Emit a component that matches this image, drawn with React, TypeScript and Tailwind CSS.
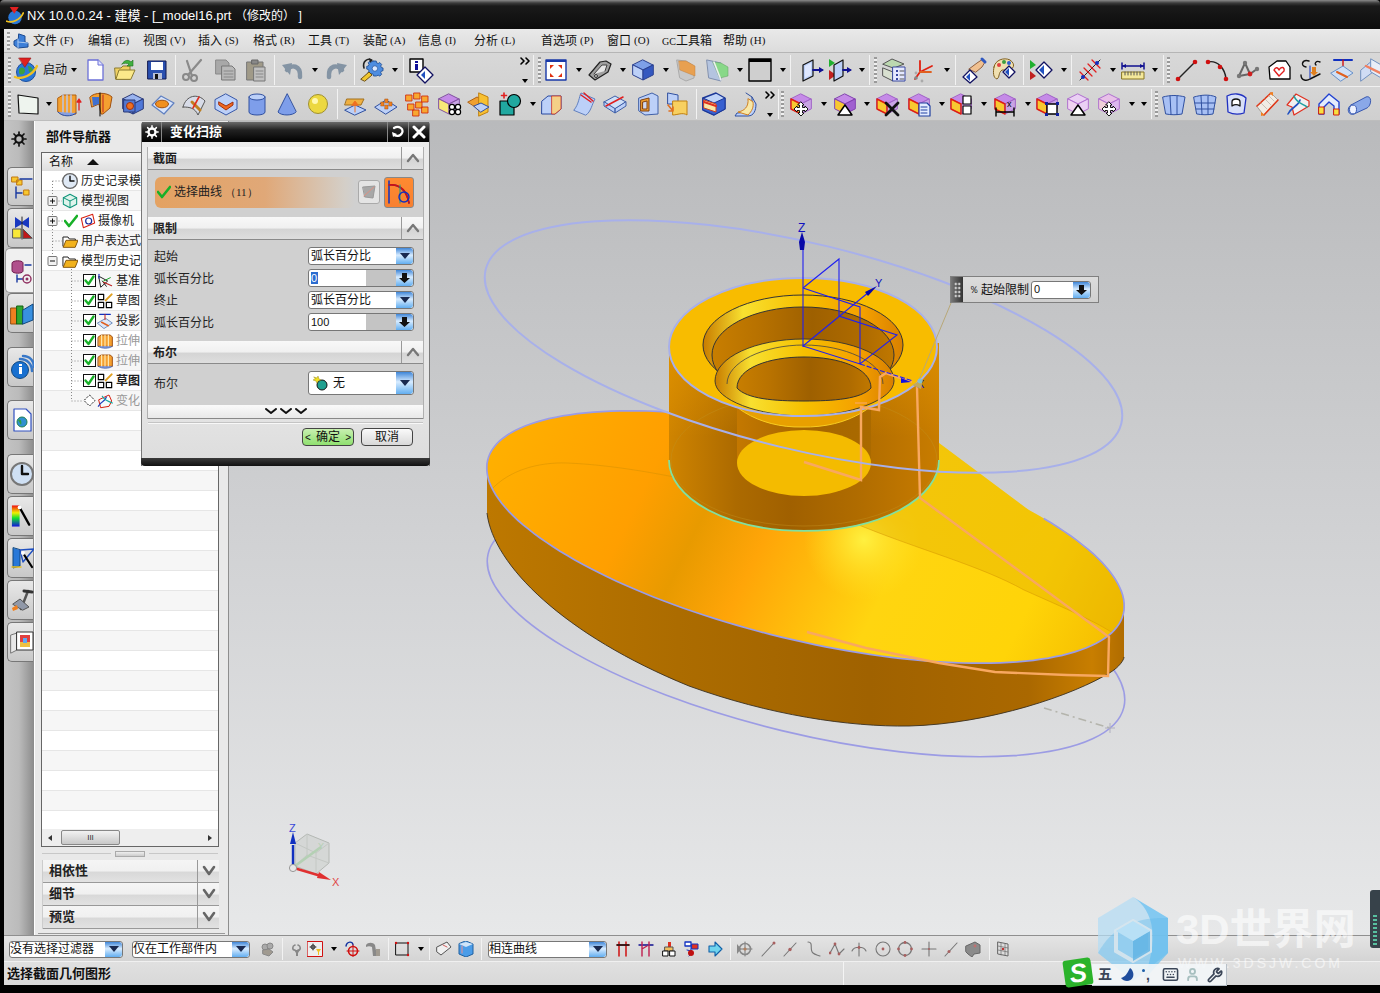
import React from "react";
import { Keyboard, Wrench, User } from "lucide-react";

const p = (d: string, fill = "none", stroke = "none", w = 1) => <path d={d} fill={fill} stroke={stroke} strokeWidth={w} strokeLinejoin="round" strokeLinecap="round" />;
const c = (x: number, y: number, r: number, fill = "none", stroke = "none", w = 1) => <circle cx={x} cy={y} r={r} fill={fill} stroke={stroke} strokeWidth={w} />;
const S = ({ children, s = 24 }: any) => <svg width={s} height={s} viewBox="0 0 24 24" className="block shrink-0 overflow-visible">{children}</svg>;
const T = ({ w, children, cls = "" }: any) => <div className={`flex items-center shrink-0 ${w} ${cls}`}>{children}</div>;
const Dd = () => <div className="w-[9px] flex justify-center"><div className="w-0 h-0 border-x-[3.5px] border-x-transparent border-t-[4px] border-t-black" /></div>;
const Grip = () => <div className="w-[3px] h-[26px] shrink-0 bg-[repeating-linear-gradient(#9a9a9a_0,#9a9a9a_2px,#f0f0f0_2px,#f0f0f0_4px)]" />;
const Sep = ({ w }: any) => <div className={`shrink-0 h-[30px] border-l border-l-[#f2f2f2] ${w}`} />;
const More = () => (
  <div className="w-[14px] h-[30px] flex flex-col items-center justify-between py-[2px] shrink-0">
    <svg width="11" height="8" viewBox="0 0 11 8">{p("M1 1l3 3-3 3M6 1l3 3-3 3", "none", "#000", 1.6)}</svg>
    <Dd />
  </div>
);

const cube = (top: string, left: string, right: string, st = "#333") => (
  <>
    {p("M12 2L22 7 12 12 2 7Z", top, st)}
    {p("M2 7L12 12V22L2 17Z", left, st)}
    {p("M22 7L12 12V22L22 17Z", right, st)}
  </>
);
const pcR = () => <>{cube("#c58ae8", "#f8c830", "#c9a4e4", "#a060c8")}{p("M2 7L12 12V22L2 17Z", "none", "#e02010", 1.4)}</>;
const MoveCross = () => p("M12 10l3 3h-1.5v2.5H16V14l3 3-3 3v-1.5h-2.5V21H15l-3 3-3-3h1.5v-2.5H8V20l-3-3 3-3v1.5h2.5V13H9Z", "#fff", "#000", 0.9);
const Tri = () => p("M12 13l7 10H5Z", "#fff", "#000", 1.5);
const gear = "M14 3h4l.6 2.6 2.3 1 2.3-1.4 2.8 2.8-1.4 2.3 1 2.3 2.4.6v4l-2.4.6-1 2.3 1.4 2.3-2.8 2.8-2.3-1.4-2.3 1L18 25h-4l-.6-2.6-2.3-1-2.3 1.4L6 20l1.4-2.3-1-2.3L4 14.8v-4l2.4-.6 1-2.3L6 5.6 8.8 2.8l2.3 1.4 2.3-1Z";

const Ic: Record<string, React.ReactNode> = {
  nx: <S>{c(12, 14, 9.5, "#2a78d8", "#1c4fa0")}{p("M5 11c3-3 6-1 6 2s-4 5-6 2ZM14 8c3 0 5 3 5 5l-4 1Z", "#3ca040")}{p("M1 19C8 22 19 17 23 8", "none", "#f0c020", 2.4)}{p("M5 0H17L11 9Z", "#e02020", "#901010", 0.6)}</S>,
  page: <S>{p("M5 2H15L20 7V22H5Z", "#fff", "#6c70d8", 1.3)}{p("M15 2V7H20", "#dfe3ff", "#6c70d8", 1)}</S>,
  folder: <S>{p("M2 10H8L10 8H17V21H3Z", "#f0d060", "#8a7a30")}{p("M3 21L6 12H22L18 21Z", "#fbe98a", "#8a7a30")}{p("M9 6C12 1 16 2 18 4L20 2V8H14L16 6C14 5 11 5 9 6Z", "#40b040", "#207020", 0.6)}</S>,
  save: <S>{p("M3 3H21V21H3Z", "#2a50b0", "#101850")}{p("M6 4H18V12H6Z", "#fff")}{p("M8 15H17V21H8Z", "#b8c0d8")}{p("M10 16H13V21H10Z", "#111")}</S>,
  scis: <S>{c(5, 19, 3, "none", "#888", 2)}{c(13, 20, 3, "none", "#888", 2)}{p("M7 17L20 2M11 18L6 3", "none", "#8a8a8a", 2.2)}</S>,
  copy: <S>{p("M3 2H13L16 5V16H3Z", "#a8a8a8", "#888")}{p("M9 8H19L22 11V22H9Z", "#b8b8b8", "#777")}{p("M11 13H20M11 16H20M11 19H20", "none", "#888")}</S>,
  paste: <S>{p("M3 4H19V22H3Z", "#a09a88", "#777")}{p("M8 2H14V6H8Z", "#888", "#666")}{p("M10 9H21V23H10Z", "#c0c0c0", "#777")}{p("M12 13H19M12 16H19M12 19H19", "none", "#888")}</S>,
  undo: <S>{p("M6 12C10 6 20 7 19 19", "none", "#8494a4", 4.5)}{p("M1 7L11 5 9 17Z", "#8494a4")}</S>,
  redo: <S>{p("M18 12C14 6 4 7 5 19", "none", "#8494a4", 4.5)}{p("M23 7L13 5 15 17Z", "#8494a4")}</S>,
  tool: <S><g transform="translate(4 1) scale(.68)">{p(gear, "#4e8de0", "#1c4a90", 1.2)}{c(16, 14, 4, "#dde9ff", "#1c4a90")}</g>{p("M1 21L9 14 12 17 5 23Z", "#f0c830", "#705010")}{p("M4 10C2 3 8 0 11 2", "none", "#222", 1.6)}{p("M9 0l4 2-3 3Z", "#222")}</S>,
  info: <S>{p("M1 1H14V14H1Z", "#fff", "#000", 1.4)}{p("M6 3h3v2H6ZM6 6h3v6H6Z", "#101098")}{p("M16 9L24 17 16 25 8 17Z", "#fff", "#101060", 1.3)}{p("M16 13V21L12 17Z", "#2050c0")}</S>,
  fit: <S>{p("M2 2H22V22H2Z", "#fff", "#1838a8", 1.4)}{p("M2 2H22V4H2Z", "#1838a8")}{p("M6 7h4L6 11ZM18 7h-4l4 4ZM6 19h4l-4-4ZM18 19h-4l4-4Z", "#e03010")}</S>,
  machine: <S>{p("M1 17L12 4 18 3 23 6 20 14 7 22Z", "#a0a0a0", "#222", 1.2)}{p("M6 16L14 7 19 7 17 13", "#e6e6e6", "#444", 1)}{c(8, 18, 1.4, "#fff", "#222")}</S>,
  bluec: <S>{cube("#7ea0e8", "#bcd0f8", "#3458c0", "#2a4090")}</S>,
  secO: <S>{p("M3 2L12 3 20 8V20L12 23 6 20Z", "#c8c8c8", "#aaa", 1)}{p("M5 3H12L21 8V18L6 12Z", "#e8a050", "#c08040", 0.5)}</S>,
  secG: <S>{p("M2 2L16 5V23L4 20Z", "#b4c4e0", "#8090b0")}{p("M8 4L16 5 23 9V18L15 20Z", "#88d888", "#60a060", 0.5)}{p("M9 4L16 22", "none", "#f0f0f0", 1.5)}</S>,
  win: <S>{p("M1 1H23V23H1Z", "#cfcfcf", "#000", 1.4)}{p("M1 1H23V4H1Z", "#000")}</S>,
  boxA: <S>{p("M3 7L13 2V18L3 23Z", "#bcd0f8", "#111", 1.2)}{p("M5 8L11 5V17L5 20Z", "#dfe8ff")}{p("M13 12H22", "none", "#101090", 1.8)}{p("M24 12l-5-3v6Z", "#101090")}</S>,
  boxB: <S>{p("M1 1V9L7 5Z", "#20b030")}{p("M1 12V22L8 17Z", "#c02020")}{p("M6 7L15 2V18L6 23Z", "#bcd0f8", "#111", 1.2)}{p("M15 12H22", "none", "#101090", 1.8)}{p("M24 12l-5-3v6Z", "#101090")}</S>,
  stack: <S>{p("M1 6L10 1 22 6 12 10Z", "#bcd8b0", "#555")}{p("M1 10L11 14V23L1 18Z", "#d8e0d0", "#555")}{p("M11 9H23V23H11Z", "#e4e8ff", "#3848a0")}{p("M14 12h2v2h-2ZM14 16h2v2h-2ZM14 20h2v2h-2Z", "#3848a0")}{p("M18 13h4M18 17h4M18 21h4", "none", "#555")}</S>,
  csys: <S>{p("M8 14V3M8 14L20 8M8 14L3 21", "none", "#e02010", 1.8)}{p("M8 14H19", "none", "#e06020", 1.8)}{c(4, 20, 1.8, "#888")}{c(4, 15, 1.4, "#aaa")}{c(10, 23, 1.4, "#aaa")}</S>,
  hand: <S>{p("M7 11L15 5 21 1 23 4 20 9 14 14Z", "#f0c090", "#906040")}{p("M20 1L23 4", "none", "#3058c0", 3)}{p("M8 12L15 19 8 25 1 19Z", "#fff", "#101060", 1.3)}{p("M8 15V23L4 19Z", "#2050c0")}</S>,
  palette: <S>{p("M2 9C3 2 12-1 18 2 24 6 22 12 15 12H10C6 15 8 19 5 21 1 20 1 14 2 9Z", "#f0e0b0", "#806020")}{c(7, 7, 2, "#e04040")}{c(12, 4, 2, "#40a040")}{c(17, 5, 2, "#3060d0")}{p("M17 8L23 14 17 20 11 14Z", "#fff", "#101060", 1.3)}{p("M17 10V18L13 14Z", "#2050c0")}</S>,
  triD: <S>{p("M1 2V11L7 7Z", "#20b030")}{p("M1 13V22L7 18Z", "#c02020")}{p("M15 4L23 12 15 20 7 12Z", "#fff", "#101060", 1.3)}{p("M15 7V17L10 12Z", "#2050c0")}</S>,
  hatch: <S>{p("M2 22L22 2", "none", "#222", 1)}{p("M2 14L10 22M6 10L14 18M10 6L18 14M14 2L22 10", "none", "#e02020", 1.3)}{c(5, 19, 2, "#1030c0")}{c(19, 5, 2, "#1030c0")}</S>,
  ruler: <S>{p("M1 5V11M23 5V11M1 8H23", "none", "#101090", 1.5)}{p("M1 8l4-2v4ZM23 8l-4-2v4Z", "#101090")}{p("M1 14H23V21H1Z", "#f4e89a", "#887722")}{p("M4 14v3M7 14v3M10 14v3M13 14v3M16 14v3M19 14v3", "none", "#555")}</S>,
  line: <S>{p("M4 21L21 4", "none", "#222", 1.4)}{c(4, 21, 2.3, "#d01010")}{c(21, 4, 2.3, "#d01010")}</S>,
  arc: <S>{p("M3 4C12 2 20 10 21 21", "none", "#222", 1.4)}{c(3, 4, 2.3, "#d01010")}{c(15, 9, 2.3, "#d01010")}{c(21, 21, 2.3, "#d01010")}</S>,
  poly: <S>{p("M3 18L9 5 14 16 21 11M3 18L14 16", "none", "#666", 2)}{c(9, 5, 2.2, "#777")}{c(3, 18, 2.2, "#777")}{c(21, 11, 2.2, "#777")}{c(14, 16, 2.4, "#d02020")}</S>,
  heart: <S>{p("M2 9L10 3H19L23 9V21H3Z", "#fff", "#000", 1.3)}{p("M7 12C9 8 11 10 12 12 14 8 18 9 17 13L12 18Z", "none", "#e02020", 1.4)}</S>,
  hook: <S>{p("M11 3C4 1 2 8 8 9M3 17C3 23 9 23 12 21L22 16M22 4C18 2 16 6 18 7", "none", "#111", 1.4)}{p("M12 8V20", "none", "#1030c0", 1)}{p("M14 9h4v5h2l-4 4-4-4h2Z", "#e08020")}</S>,
  proj: <S>{p("M4 2H22", "none", "#1030c0", 2)}{p("M13 2V10", "none", "#d01010", 1.4)}{p("M13 14l-3-4h6Z", "#d01010")}{p("M1 15L13 8 23 15 11 23Z", "#cfe0f8", "#6890c8")}{p("M7 14L17 19", "none", "#e06020", 2)}</S>,
  inter: <S>{p("M1 12L13 2V14L1 23Z", "#d0dcf4", "#7090c0")}{p("M11 1L23 8V21L11 14Z", "#e8edf8", "#7090c0")}{p("M6 8L20 15", "none", "#f08060", 2.5)}</S>,
  sheet: <S>{p("M2 3L22 6V22L3 21Z", "#eef4ee", "#111", 1.2)}</S>,
  ext: <S>{p("M1 6L6 3 19 3 19 22 6 23 1 20Z", "#f4a030", "#b06010")}{p("M6 3V23M10 3V22M14 3V22", "none", "#b8c8f0", 1.4)}{p("M1 20C5 25 15 25 19 21", "#88a0e0", "#3050a0")}{p("M22 18V9M22 7l-2 3h4Z", "none", "#e02020", 1.3)}</S>,
  rev: <S>{p("M1 5C5 0 18 0 23 5L21 16 14 22H12L10 12 3 15Z", "#f4a030", "#a05010")}{p("M11 1V24", "none", "#000", 1)}{p("M3 5H10V12L4 14Z", "#4070d0")}{p("M14 3V20", "none", "#c02020", 1)}</S>,
  bluehole: <S>{cube("#9ab4f0", "#7e9ee8", "#5078d8", "#283878")}{p("M3 8H14V20H3Z", "#5578d0", "#283878")}{c(9, 14, 3.5, "#f07020", "#a03010")}</S>,
  pad: <S>{p("M1 13L10 4 23 11 13 22Z", "#d8e4fa", "#6080c0", 1.2)}<ellipse cx="11" cy="12" rx="6.5" ry="3.8" fill="#f09020" stroke="#a05010" /></S>,
  rib: <S>{p("M1 15C4 3 16 1 23 9L16 23C13 16 8 15 1 15Z", "#d8dce8", "#555")}{p("M10 10L18 18", "none", "#c08020", 3)}{p("M17 5L11 16", "none", "#e03020", 1.6)}</S>,
  shell: <S>{p("M12 2L23 8V17L12 23 1 17V8Z", "#bcd0f8", "#3858a8")}{p("M5 10L12 14 19 10 19 13 12 18 5 13Z", "#f06820", "#a03010")}</S>,
  cyl: <S>{p("M4 5V20C4 24 20 24 20 20V5Z", "#7e9eea", "#3050a0")}<ellipse cx="12" cy="5" rx="8" ry="3" fill="#bcd0f8" stroke="#3050a0" /></S>,
  cone: <S>{p("M12 2L3 20C6 24 18 24 21 20Z", "#7e9eea", "#3050a0")}</S>,
  sphere: <S>{c(12, 12, 9.5, "#ecd840", "#a09030")}{c(9, 9, 3, "#fff8b0")}</S>,
  plane: <S>{p("M4 7H21L18 13H2Z", "#f0b040", "#a07020")}{p("M2 18L12 13 23 18 12 23Z", "#bcd0f8", "#3050a0")}{p("M12 20V11M9 13l3-4 3 4Z", "#f07020", "#f07020")}</S>,
  pins: <S>{p("M1 15L12 8 23 15 12 22Z", "#bcd0f8", "#3050a0")}{p("M7 10h3v4H7ZM11 7h3v4h-3ZM15 10h3v4h-3ZM11 13h3v4h-3Z", "#f08020", "#a05010", 0.5)}</S>,
  cubes: <S>{p("M1 3h6v6H1ZM9 1h6v6H9ZM17 4h6v6h-6ZM3 12h6v6H3ZM11 10h6v6h-6ZM17 15h6v6h-6ZM8 18h6v6H8Z", "#f8a830", "#d03010", 0.9)}</S>,
  cholo: <S>{cube("#c58ae8", "#f8e878", "#c9a4e4", "#8050a0")}{c(15, 15, 2.6, "#fff", "#000", 1.2)}{c(21, 15, 2.6, "#fff", "#000", 1.2)}{c(15, 20, 2.6, "#fff", "#000", 1.2)}{c(21, 20, 2.6, "#fff", "#000", 1.2)}</S>,
  split: <S>{p("M1 10L10 5 18 9 9 15Z", "#f0a030", "#b06010")}{p("M12 1L21 5V20L12 24Z", "#f8c030", "#c08010")}{p("M7 14L14 11 22 15 14 20Z", "#bcd0f8", "#3050a0")}</S>,
  boole: <S>{p("M1 9H15V23H1Z", "#20a8a0", "#000", 1.2)}{c(15, 9, 6.5, "#20a8a0", "#000", 1.2)}{p("M5 1V6M2.5 3.5H7.5", "none", "#e02020", 1.6)}</S>,
  bsub: <S>{p("M1 9L7 4H20V17L14 22H1Z", "#bcd0f8", "#2848a0")}{p("M11 4H20V17L14 22H11Z", "#f4d088", "#d03020", 0.8)}</S>,
  trim: <S>{p("M2 18C7 12 7 5 9 1L23 7C20 12 19 20 14 23Z", "#bcd0f8", "#6080c0")}{p("M12 1L21 9M9 3L19 10", "none", "#e02020", 1.5)}</S>,
  cut: <S>{p("M1 10L12 4 23 10 12 17Z", "#cfe0f8", "#4060a8")}{p("M1 10V14L12 21V17ZM23 10V14L12 21V17Z", "#bcd0f8", "#4060a8")}{p("M3 14L20 5", "none", "#e02020", 1.6)}</S>,
  shell2: <S>{p("M4 6L17 1 23 4V22L10 23 4 19Z", "#bcd0f8", "#4060a8")}{p("M6 8L14 6V19H6Z", "#f0a030", "#804010")}{p("M8 10L12 9V17H8Z", "#cfd8f0", "#804010")}</S>,
  mirror: <S>{p("M3 1L13 3V12H3Z", "#bcd0f8", "#3050a0")}{p("M8 9H22V23C18 20 12 23 8 23Z", "#f8d060", "#c08010")}{p("M3 13L8 19M8 15V19H4", "none", "#e07020", 1.6)}</S>,
  blend: <S>{p("M1 6L14 1 23 6V17L12 23 1 18Z", "#c0d4f8", "#1c3898", 1.4)}{p("M1 6L12 11 23 6V17L12 23 1 18Z", "#3860d0", "#1c3898")}{p("M2 8L14 12V20L2 16Z", "#f8e8a8", "#cc4020")}{p("M2 10L14 14", "none", "#e03020", 2)}</S>,
  sweep: <S>{p("M12 1L18 5V14C16 19 8 21 3 21L1 24H14C20 24 22 18 22 12L18 5", "#bcd0f8", "#3050a0")}{p("M14 7C15 15 10 19 4 20L14 23C18 19 20 15 19 10Z", "#f8e8a8", "#d08020")}</S>,
  cmove: <S>{pcR()}<MoveCross /></S>,
  cdraft: <S>{cube("#c58ae8", "#f8c830", "#a060d0", "#8040b0")}<Tri /></S>,
  cdel: <S>{pcR()}{p("M11 11L23 23M23 11L11 23", "none", "#111", 2.8)}</S>,
  cpage: <S>{pcR()}{p("M12 11H20L23 14V24H12Z", "#e4ecff", "#2040a0", 1.2)}{p("M14 15h6M14 18h6M14 21h6", "none", "#2040a0")}</S>,
  ctwin: <S>{pcR()}{p("M14 4H22V12H14ZM14 14H22V22H14Z", "#fff", "#000", 1.2)}</S>,
  cdim: <S>{pcR()}{p("M3 16V24M21 16V24M3 20H21", "none", "#000", 1.4)}<text x="14" y="15" fontSize="9" fontFamily="Liberation Sans" fill="#000">x</text></S>,
  cres: <S>{pcR()}{p("M12 12H22V22H12Z", "#fff", "#000", 1.4)}{p("M10 10h3v3h-3ZM21 10h3v3h-3ZM10 21h3v3h-3ZM21 21h3v3h-3Z", "#1020a0")}</S>,
  cdr2: <S>{cube("#ead0f4", "#f0d4f0", "#ead0f4", "#b070d0")}<Tri /></S>,
  cmv2: <S>{cube("#e8c0e8", "#f0d0d8", "#ddb8ee", "#b070d0")}<MoveCross /></S>,
  s1: <S>{p("M1 5C8 3 16 3 23 5L20 22C15 23 9 23 4 22Z", "#a8c0f4", "#3050a0")}{p("M8 4L9 22M15 4L15 22", "none", "#3050a0")}</S>,
  s2: <S>{p("M1 5C8 3 16 2 23 5L20 22C15 23 9 23 4 22Z", "#a8c0f4", "#3050a0")}{p("M8 4L9 22M15 4L15 22M2 11H22M3 17H21", "none", "#3050a0")}</S>,
  s3: <S>{p("M3 4C9 1 17 1 22 6L20 21C14 23 8 22 4 20Z", "#d8e0f8", "#2030c0", 1.3)}{p("M8 10C8 6 16 6 16 10V14C13 12 11 12 8 14Z", "#fff", "#111", 1.3)}</S>,
  s4: <S>{p("M2 14L16 1 23 8 9 23Z", "#f0ece4", "#a8a098")}{p("M2 14L16 1M9 23L23 8", "none", "#e03818", 1.6)}{p("M6 11l6 6M10 7l6 6M14 4l5 5", "none", "#c8c0b8")}{p("M14 1l4-1v4ZM10 23l-4 1v-4Z", "#f08020")}</S>,
  s5: <S>{p("M1 13L10 2 23 9V14L8 23 6 15Z", "#f0f0f0", "#e03020", 1.2)}{p("M2 22C6 14 12 15 14 8", "none", "#2050c0", 1.6)}{p("M8 4C11 12 18 12 21 15", "none", "#20a0a0", 1.6)}</S>,
  s6: <S>{p("M2 12L12 2 22 10V22H17V14L12 10 7 15V22H2Z", "#e4ecfc", "#2040d0", 1.4)}{p("M2 15H7V22H2ZM17 17H22V23H17Z", "#f8e040", "#d02010")}</S>,
  s7: <S>{p("M3 13L18 5C24 3 24 13 19 16L6 22C0 24-2 16 3 13Z", "#8aa8e8", "#3858b0")}<ellipse cx="5" cy="17.5" rx="3.5" ry="4.4" fill="#eef2ff" stroke="#3858b0" /></S>,
};

const Row1 = () => (
  <div className="h-[34px] flex items-center pl-[1px] bg-[linear-gradient(#d8d8d8,#d2d2d2)] border-b border-b-[#f0f0f0]">
    <T w="w-[9px]" cls="pl-[3px]"><Grip /></T>
    <T w="w-[26px]">{Ic.nx}</T>
    <T w="w-[29px]" cls="pl-[3px] text-[12px] text-[#111]">启动</T>
    <T w="w-[14px]"><Dd /></T>
    <T w="w-[30px]">{Ic.page}</T>
    <T w="w-[32px]">{Ic.folder}</T>
    <T w="w-[30px]">{Ic.save}</T>
    <Sep w="w-[6px]" />
    <T w="w-[32px]">{Ic.scis}</T>
    <T w="w-[31px]">{Ic.copy}</T>
    <T w="w-[30px]">{Ic.paste}</T>
    <Sep w="w-[7px]" />
    <T w="w-[29px]">{Ic.undo}</T>
    <T w="w-[14px]"><Dd /></T>
    <T w="w-[30px]">{Ic.redo}</T>
    <Sep w="w-[6px]" />
    <T w="w-[30px]">{Ic.tool}</T>
    <T w="w-[13px]"><Dd /></T>
    <Sep w="w-[6px]" />
    <T w="w-[109px]">{Ic.info}</T>
    <More />
    <T w="w-[1px]"><span /></T>
    <Sep w="w-[5px]" />
    <T w="w-[6px]"><Grip /></T>
    <T w="w-[30px]">{Ic.fit}</T><T w="w-[14px]"><Dd /></T>
    <T w="w-[30px]">{Ic.machine}</T><T w="w-[13px]"><Dd /></T>
    <T w="w-[30px]">{Ic.bluec}</T><T w="w-[13px]"><Dd /></T>
    <T w="w-[31px]">{Ic.secO}</T>
    <T w="w-[30px]">{Ic.secG}</T><T w="w-[13px]"><Dd /></T>
    <T w="w-[30px]">{Ic.win}</T><T w="w-[12px]"><Dd /></T>
    <Sep w="w-[10px]" />
    <T w="w-[28px]">{Ic.boxA}</T>
    <T w="w-[29px]">{Ic.boxB}</T><T w="w-[12px]"><Dd /></T>
    <Sep w="w-[5px]" />
    <T w="w-[8px]"><Grip /></T>
    <T w="w-[30px]">{Ic.stack}</T>
    <T w="w-[30px]">{Ic.csys}</T><T w="w-[13px]"><Dd /></T>
    <Sep w="w-[7px]" />
    <T w="w-[30px]">{Ic.hand}</T>
    <T w="w-[31px]">{Ic.palette}</T>
    <Sep w="w-[6px]" />
    <T w="w-[30px]">{Ic.triD}</T><T w="w-[12px]"><Dd /></T>
    <Sep w="w-[7px]" />
    <T w="w-[30px]">{Ic.hatch}</T><T w="w-[13px]"><Dd /></T>
    <T w="w-[29px]">{Ic.ruler}</T><T w="w-[13px]"><Dd /></T>
    <Sep w="w-[4px]" />
    <T w="w-[7px]"><Grip /></T>
    <T w="w-[31px]">{Ic.line}</T>
    <T w="w-[31px]">{Ic.arc}</T>
    <T w="w-[31px]">{Ic.poly}</T>
    <T w="w-[31px]">{Ic.heart}</T>
    <T w="w-[32px]">{Ic.hook}</T>
    <T w="w-[30px]">{Ic.proj}</T>
    <T w="w-[20px]">{Ic.inter}</T>
  </div>
);

const Row2 = () => (
  <div className="h-[34px] flex items-center pl-[1px] bg-[linear-gradient(#d6d6d6,#cfcfcf)] border-b border-b-[#bdbdbd]">
    <T w="w-[11px]" cls="pl-[3px]"><Grip /></T>
    <T w="w-[28px]">{Ic.sheet}</T><T w="w-[13px]"><Dd /></T>
    <T w="w-[32px]">{Ic.ext}</T>
    <T w="w-[32px]">{Ic.rev}</T>
    <T w="w-[30px]">{Ic.bluehole}</T>
    <T w="w-[31px]">{Ic.pad}</T>
    <T w="w-[32px]">{Ic.rib}</T>
    <T w="w-[31px]">{Ic.shell}</T>
    <T w="w-[30px]">{Ic.cyl}</T>
    <T w="w-[31px]">{Ic.cone}</T>
    <T w="w-[31px]">{Ic.sphere}</T>
    <Sep w="w-[6px]" />
    <T w="w-[31px]">{Ic.plane}</T>
    <T w="w-[31px]">{Ic.pins}</T>
    <T w="w-[32px]">{Ic.cubes}</T>
    <T w="w-[30px]">{Ic.cholo}</T>
    <T w="w-[32px]">{Ic.split}</T>
    <T w="w-[29px]">{Ic.boole}</T><T w="w-[13px]"><Dd /></T>
    <T w="w-[31px]">{Ic.bsub}</T>
    <T w="w-[31px]">{Ic.trim}</T>
    <T w="w-[32px]">{Ic.cut}</T>
    <T w="w-[30px]">{Ic.shell2}</T>
    <T w="w-[31px]">{Ic.mirror}</T>
    <Sep w="w-[6px]" />
    <T w="w-[32px]">{Ic.blend}</T>
    <T w="w-[29px]">{Ic.sweep}</T>
    <More />
    <T w="w-[1px]"><span /></T>
    <Sep w="w-[3px]" />
    <T w="w-[8px]"><Grip /></T>
    <T w="w-[30px]">{Ic.cmove}</T><T w="w-[14px]"><Dd /></T>
    <T w="w-[29px]">{Ic.cdraft}</T><T w="w-[13px]"><Dd /></T>
    <T w="w-[32px]">{Ic.cdel}</T>
    <T w="w-[30px]">{Ic.cpage}</T><T w="w-[12px]"><Dd /></T>
    <T w="w-[30px]">{Ic.ctwin}</T><T w="w-[14px]"><Dd /></T>
    <T w="w-[30px]">{Ic.cdim}</T><T w="w-[12px]"><Dd /></T>
    <T w="w-[31px]">{Ic.cres}</T>
    <T w="w-[31px]">{Ic.cdr2}</T>
    <T w="w-[30px]">{Ic.cmv2}</T><T w="w-[12px]"><Dd /></T>
    <T w="w-[12px]"><Dd /></T>
    <Sep w="w-[4px]" />
    <T w="w-[7px]"><Grip /></T>
    <T w="w-[31px]">{Ic.s1}</T>
    <T w="w-[31px]">{Ic.s2}</T>
    <T w="w-[31px]">{Ic.s3}</T>
    <T w="w-[31px]">{Ic.s4}</T>
    <T w="w-[31px]">{Ic.s5}</T>
    <T w="w-[31px]">{Ic.s6}</T>
    <T w="w-[24px]">{Ic.s7}</T>
  </div>
);

const M = ({ t, k, w }: any) => (
  <div className={`flex items-center shrink-0 ${w}`}>
    <span>{t}</span>
    <span className="ml-[3px] text-[11px] font-['Liberation_Serif',serif]">({k})</span>
  </div>
);

const Menu = () => (
  <div className="h-[24px] flex items-center pl-[3px] bg-[linear-gradient(#e9e9e9,#dcdcdc)] border-b border-b-[#b5b5b5] text-[12px] text-[#111]">
    <div className="w-[3px] h-[18px] mr-[3px] bg-[repeating-linear-gradient(#a0a0a0_0,#a0a0a0_2px,#f0f0f0_2px,#f0f0f0_4px)]" />
    <div className="w-[20px]"><svg width="16" height="16" viewBox="0 0 16 16">{p("M6 1L12 3V9L15 10V14L5 15 1 12V8L5 6Z", "#3d7fd8", "#1c4a90")}{p("M5 6V15M5 9L15 10", "none", "#a8c8f0")}</svg></div>
    <M t="文件" k="F" w="w-[55px]" />
    <M t="编辑" k="E" w="w-[55px]" />
    <M t="视图" k="V" w="w-[55px]" />
    <M t="插入" k="S" w="w-[55px]" />
    <M t="格式" k="R" w="w-[55px]" />
    <M t="工具" k="T" w="w-[55px]" />
    <M t="装配" k="A" w="w-[55px]" />
    <M t="信息" k="I" w="w-[56px]" />
    <M t="分析" k="L" w="w-[67px]" />
    <M t="首选项" k="P" w="w-[66px]" />
    <M t="窗口" k="O" w="w-[55px]" />
    <div className="w-[61px] shrink-0"><span className="text-[10px] font-['Liberation_Serif',serif]">GC</span>工具箱</div>
    <M t="帮助" k="H" w="w-[50px]" />
  </div>
);

const CheckBox = () => (
  <svg width="13" height="13" viewBox="0 0 13 13" className="shrink-0">
    <rect x="0.5" y="0.5" width="12" height="12" fill="#fff" stroke="#111" />
    {p("M2.5 6.5L5.5 10 10.5 2.5", "none", "#18b028", 2.4)}
  </svg>
);
const small = (n: React.ReactNode) => <svg width="16" height="16" viewBox="0 0 24 24" className="shrink-0">{n}</svg>;
const Tk = () => <svg width="14" height="14" viewBox="0 0 14 14" className="shrink-0">{p("M1 7L5 12 13 2", "none", "#18b028", 2.6)}</svg>;
const clockI = small(<>{c(12, 12, 11, "#dfe9f5", "#666", 2)}{p("M12 5V12H18", "none", "#111", 2.2)}</>);
const folderI = small(<>{p("M2 6H9L11 9H20V20H2Z", "#fff", "#222", 1.5)}{p("M2 21L6 11H24L20 21Z", "#f2b21c", "#8a5c10", 1.5)}</>);
const viewI = small(<>{p("M12 2L22 7V17L12 22 2 17V7Z", "#dff4ec", "#10957a", 1.6)}{p("M2 7L12 12 22 7M12 12V22", "none", "#10957a", 1.5)}</>);
const camI = small(<>{p("M2 8L19 2 22 15 5 22Z", "#fff", "#d82010", 1.6)}{c(13, 12, 4.5, "none", "#1a2aa0", 1.8)}</>);
const csysI = small(<>{p("M3 5L16 12 6 21ZM8 12L14 20", "none", "#222", 1.5)}{p("M10 12L20 7", "none", "#18a028", 1.5)}{p("M3 2V8", "none", "#2030c0", 1.6)}{p("M10 14L22 19", "none", "#c02020", 1.6)}</>);
const sketchI = small(<>{p("M2 2H10V10H2ZM2 14H10V22H2ZM14 14H22V22H14Z", "#fff", "#000", 1.8)}{p("M13 11L22 2", "none", "#e0a020", 3)}</>);
const projI = small(<>{p("M4 2H20", "none", "#1030c0", 2)}{p("M1 15L13 8 23 15 11 23Z", "#dfe8f8", "#7090c0", 1.5)}{p("M7 14L17 19", "none", "#e06020", 2.4)}{p("M12 2V10", "none", "#c02020", 1.5)}</>);
const extI = small(<>{p("M2 6L6 3H20L23 6V20H2Z", "#f4a030", "#a05010", 1.5)}{p("M7 3V21M12 3V21M17 3V21", "none", "#fff2c0", 1.6)}{p("M2 20C7 24 18 24 23 20", "#7b9ae0", "#3050a0")}</>);
const morphI = small(<>{p("M3 10L18 3 22 12 18 20 6 22Z", "#f6fbfa", "#d82010", 1.5)}{p("M2 20C6 12 12 14 14 6", "none", "#2040c0", 1.8)}{p("M8 5C12 13 18 12 23 15", "none", "#18a8a0", 1.8)}</>);
const Diam = () => <svg width="13" height="13" viewBox="0 0 13 13" className="shrink-0"><path d="M6.5 1L12 6.5 6.5 12 1 6.5Z" fill="#fff" stroke="#111" strokeDasharray="2 1.4" /></svg>;

const gapS = (k: string, w: string) => <span key={k} className={`${w} shrink-0`} />;
const treeRows: any[] = [
  { c: "pl-[20px]", i: [clockI], g: "ml-[3px]", t: "历史记录模" },
  { c: "pl-[20px]", i: [viewI], g: "ml-[3px]", t: "模型视图" },
  { c: "pl-[22px]", i: [<Tk key="a" />, gapS("b", "w-[2px]"), camI], g: "ml-[2px]", t: "摄像机" },
  { c: "pl-[20px]", i: [folderI], g: "ml-[3px]", t: "用户表达式" },
  { c: "pl-[20px]", i: [folderI], g: "ml-[3px]", t: "模型历史记" },
  { c: "pl-[41px]", i: [<CheckBox key="a" />, gapS("b", "w-[1px]"), csysI], g: "ml-[3px]", t: "基准" },
  { c: "pl-[41px]", i: [<CheckBox key="a" />, gapS("b", "w-[1px]"), sketchI], g: "ml-[3px]", t: "草图" },
  { c: "pl-[41px]", i: [<CheckBox key="a" />, gapS("b", "w-[1px]"), projI], g: "ml-[3px]", t: "投影" },
  { c: "pl-[41px]", i: [<CheckBox key="a" />, gapS("b", "w-[1px]"), extI], g: "ml-[3px] text-[#999]", t: "拉伸" },
  { c: "pl-[41px]", i: [<CheckBox key="a" />, gapS("b", "w-[1px]"), extI], g: "ml-[3px] text-[#999]", t: "拉伸" },
  { c: "pl-[41px]", i: [<CheckBox key="a" />, gapS("b", "w-[1px]"), sketchI], g: "ml-[3px] font-bold", t: "草图" },
  { c: "pl-[41px]", i: [<Diam key="a" />, gapS("b", "w-[1px]"), morphI], g: "ml-[3px] text-[#999]", t: "变化" },
];

const TreeLines = () => (
  <svg className="absolute left-0 top-0 pointer-events-none" width="176" height="260">
    <g stroke="#888" strokeDasharray="1 2" fill="none">
      <path d="M10.5 10V90M10.5 10H20M10.5 30H20M10.5 50H22M10.5 70H20M29.5 98V230M29.5 110H41M29.5 130H41M29.5 150H41M29.5 170H41M29.5 190H41M29.5 210H41M29.5 230H41" />
    </g>
    {[30, 50, 90].map((y, i) => (
      <g key={i}>
        <rect x="6" y={y - 4.5} width="9" height="9" rx="1" fill="#f2f2f2" stroke="#777" />
        <path d={i === 2 ? `M8 ${y}H13` : `M8 ${y}H13M10.5 ${y - 2.5}V${y + 2.5}`} stroke="#111" />
      </g>
    ))}
  </svg>
);

const Tree = () => {
  const rows = Array.from({ length: 33 });
  return (
    <div className="w-[178px] h-[695px] border border-[#666] bg-white flex flex-col">
      <div className="h-[18px] shrink-0 flex items-center pl-[7px] bg-[linear-gradient(#f6f6f6,#dedede)] text-[12px] text-[#111]">
        名称
        <div className="ml-[14px] w-0 h-0 border-x-[6px] border-x-transparent border-b-[6px] border-b-[#111]" />
      </div>
      <div className="relative flex-1 overflow-hidden">
        {rows.map((_, i) => {
          const r = treeRows[i];
          return (
            <div key={i} className={`h-[20px] flex items-center whitespace-nowrap text-[12px] text-[#222] border-b border-b-[#e6e6e6] ${i % 2 ? "bg-[#f6f6f6]" : "bg-white"} ${r ? r.c : ""}`}>
              {r && r.i}
              {r && <span className={`shrink-0 ${r.g}`}>{r.t}</span>}
            </div>
          );
        })}
        <TreeLines />
      </div>
      <div className="h-[17px] shrink-0 flex items-center bg-[#eeeeee] px-[6px]">
        <div className="w-0 h-0 border-y-[3.5px] border-y-transparent border-r-[4px] border-r-[#333]" />
        <div className="ml-[9px] w-[59px] h-[15px] rounded-[2px] border border-[#888] bg-[linear-gradient(#f2f2f2,#c8c8c8)] flex items-center justify-center text-[8px] text-[#333] leading-none">III</div>
        <div className="ml-auto w-0 h-0 border-y-[3.5px] border-y-transparent border-l-[4px] border-l-[#333]" />
      </div>
    </div>
  );
};

const Vee = () => <svg width="14" height="12" viewBox="0 0 14 12">{p("M2 2L7 9 12 2", "none", "#666", 2.6)}</svg>;
const Caret = () => <svg width="14" height="10" viewBox="0 0 14 10">{p("M2 8L7 2 12 8", "none", "#777", 2.4)}</svg>;

const NavSec = ({ t }: any) => (
  <div className="h-[23px] flex items-center border-b border-b-[#999] bg-[linear-gradient(#f5f5f5,#f0f0f0_50%,#d8d8d8_55%,#e2e2e2)]">
    <div className="w-[154px] pl-[6px] text-[13px] font-bold text-[#222]">{t}</div>
    <div className="flex-1 h-full border-l border-l-[#999] flex items-center justify-center"><Vee /></div>
  </div>
);

const Nav = () => (
  <div className="w-[195px] shrink-0 h-full bg-[#e9e9e9] border-l border-l-white border-r border-r-[#8e8e8e] flex flex-col">
    <div className="h-[31px] pl-[11px] text-[13px] font-bold text-[#111] flex items-center">部件导航器</div>
    <div className="pl-[6px]"><Tree /></div>
    <div className="h-[13px] pl-[7px] flex items-center">
      <div className="w-[69px] h-px bg-[#c8c8c8]" />
      <div className="mx-[4px] w-[30px] h-[6px] border border-[#aaa] bg-[linear-gradient(#eee,#ccc)]" />
      <div className="w-[69px] h-px bg-[#c8c8c8]" />
    </div>
    <div className="ml-[7px] w-[177px] border-l border-l-[#ccc]">
      <NavSec t="相依性" />
      <NavSec t="细节" />
      <NavSec t="预览" />
    </div>
    <div className="mt-auto mx-[3px] h-[2px] border-t border-t-[#999]" />
  </div>
);

const Tab = ({ cls, children, active }: any) => (
  <div className={`flex items-center pl-[2px] rounded-l-[5px] border-y border-l ${active ? "w-[28px] -ml-[2px] bg-[#f0f0f0] border-[#999]" : "w-[26px] bg-[linear-gradient(#e8e8e8,#c8c8c8)] border-[#777]"} ${cls}`}>
    {children}
  </div>
);

const TabStrip = () => (
  <div className="w-[30px] shrink-0 h-full pl-[3px] bg-[linear-gradient(90deg,#c4c4c4,#bbb_50%,#8c8c8c)] flex flex-col">
    <div className="h-[31px] flex items-center pl-[4px] mt-[2px]">
      <svg width="16" height="16" viewBox="0 0 16 16">{c(8, 8, 3.8, "none", "#111", 2.2)}{p("M8 1V3M8 13V15M1 8H3M13 8H15M3 3L4.5 4.5M11.5 11.5L13 13M3 13L4.5 11.5M11.5 4.5L13 3", "none", "#111", 1.7)}</svg>
    </div>
    <Tab cls="mt-[13px] h-[39px]"><S>{p("M2 2h6v5H2ZM7 5h5v5H7Z", "#f8c830", "#c07810")}{p("M6 12V23M6 18H12M10 4H22", "none", "#1838a0", 1.4)}{p("M14 15h5v5h-5Z", "#f8c830", "#c07810")}</S></Tab>
    <Tab cls="mt-[2px] h-[40px]"><S>{p("M5 1L12 6V8L5 12ZM19 1L12 6V8L19 12Z", "#1838c0")}{p("M12 1V23", "none", "#222", 1)}{p("M3 13H11V22H3Z", "#f8e838", "#555")}{p("M13 22V13L22 22Z", "#c01818", "#555")}</S></Tab>
    <Tab active cls="h-[45px]"><S>{p("M4 4C4 1 15 1 15 4V12C15 15 4 15 4 12Z", "#b0508c", "#702050")}{p("M9 16V23M9 20H15M17 6H23", "none", "#1838a0", 1.4)}{c(19, 20, 4, "none", "#903060", 1.4)}{c(19, 20, 1.5, "#903060")}</S></Tab>
    <Tab cls="h-[40px]"><S>{p("M1 7H7V23H1Z", "#f08020", "#905010")}{p("M7 5H13V23H7Z", "#30a830", "#106010")}{p("M13 9L23 3V19L13 23Z", "#3890e0", "#104880")}</S></Tab>
    <Tab cls="mt-[14px] h-[40px]"><S>{c(10, 15, 8.5, "#1870d0", "#104880")}{p("M9 9h3v2H9ZM9 12h3v7H9Z", "#fff")}{p("M10 4C17 4 22 9 22 16M13 1C20 1 24 6 24 12", "none", "#3878c8", 2.5)}</S></Tab>
    <Tab cls="mt-[13px] h-[40px]"><S>{p("M4 1H16L21 6V23H4Z", "#fff", "#3050c0", 1.2)}{c(12, 14, 5, "#3090d0", "#208050")}{p("M8 12c3-2 4 2 3 5", "#30a040")}</S></Tab>
    <Tab cls="mt-[14px] h-[40px]"><S>{c(12, 12, 11, "#cfe0f4", "#777", 2)}{p("M12 4V12H18", "none", "#111", 2.4)}</S></Tab>
    <Tab cls="mt-[2px] h-[40px]"><svg width="24" height="24" viewBox="0 0 24 24"><defs><linearGradient id="rb" x2="0" y2="1"><stop stopColor="#f01010" /><stop offset=".35" stopColor="#f0f000" /><stop offset=".6" stopColor="#10e030" /><stop offset="1" stopColor="#1010e0" /></linearGradient></defs><rect x="2" y="1" width="8" height="22" fill="url(#rb)" />{p("M10 3L20 21", "none", "#000", 2.4)}{c(10, 3, 2, "#fff")}</svg></Tab>
    <Tab cls="mt-[2px] h-[40px]"><S>{p("M3 2V22L10 20V4Z", "#2878d8", "#104880")}{p("M10 4L24 3 13 16Z", "none", "#2050c0", 1.4)}{p("M13 7L22 21", "none", "#000", 2.2)}{c(13, 7, 2, "#fff")}{p("M2 21H11", "none", "#e8c020", 1.5)}</S></Tab>
    <Tab cls="mt-[2px] h-[40px]"><S>{p("M11 21L18 3", "none", "#555", 2.5)}{p("M14 3L22 4", "none", "#333", 3)}{p("M3 16L10 11 19 19 13 22Z", "#9098a8", "#555")}{p("M2 20L7 17 8 21 3 23Z", "#f08020")}</S></Tab>
    <Tab cls="mt-[2px] h-[40px]"><S>{p("M1 5L7 3V20L1 23Z", "#e8e8e8", "#777")}{p("M7 2H23V20H7Z", "#fff", "#333")}{p("M10 5H20V17H10Z", "#e04040")}{p("M10 12H20V17H10Z", "#f0c040")}{p("M13 8h4v5h-4Z", "#60a8f0")}</S></Tab>
    <div className="flex-1" />
  </div>
);

function ell(cx: number, cy: number, a: number, b: number, deg: number, t0: number, t1: number) {
  const th = (deg * Math.PI) / 180;
  const out: string[] = [];
  for (let t = t0; t <= t1; t += 2) {
    const r = (t * Math.PI) / 180;
    const u = a * Math.cos(r);
    const v = b * Math.sin(r);
    out.push(`${(cx + u * Math.cos(th) - v * Math.sin(th)).toFixed(1)} ${(cy + u * Math.sin(th) + v * Math.cos(th)).toFixed(1)}`);
  }
  return "M" + out.join("L");
}

const wing = "M880 425L940 443L1043 520L1000 560L860 500Z";
const faceEdge = ell(806.5, 537, 327, 103, 13.6, -46, 240);
const wallB = "C494 565 565 635 690 686C770 715 850 727 910 726C990 724 1075 695 1112 672C1120 667 1125 660 1125 657";
const wall = `M488 467V513${wallB}V607L1000 500L600 450Z`;
const wallEdge = `M488 513${wallB}`;
const fold = "M492 490C510 470 540 462 568 463C620 465 690 478 760 497C800 508 830 515 855 523C920 550 980 565 1025 590C1070 610 1105 625 1124 640";
const gdef = (id: string, stops: [number, string][]) => (
  <linearGradient id={id} x1="0" x2="1" y1="0" y2="0">{stops.map(([o, s], i) => <stop key={i} offset={o} stopColor={s} />)}</linearGradient>
);
const FaceShape = () => (
  <>
    <ellipse cx="806.5" cy="537" rx="327" ry="103" transform="rotate(13.6 806.5 537)" />
    <path d={wing} />
  </>
);

const Model = () => (
  <svg className="block" width="1150" height="814" viewBox="230 121 1150 814">
    <defs>
      <linearGradient id="face" gradientUnits="userSpaceOnUse" x1="488" y1="480" x2="1125" y2="620">
        <stop offset="0" stopColor="#ffb000" /><stop offset=".24" stopColor="#ff9f00" /><stop offset=".34" stopColor="#e89a00" /><stop offset=".44" stopColor="#ffa508" /><stop offset=".64" stopColor="#ffd510" /><stop offset=".85" stopColor="#ffd408" /><stop offset="1" stopColor="#f4bc00" />
      </linearGradient>
      <radialGradient id="hl" gradientUnits="userSpaceOnUse" cx="865" cy="540" r="60"><stop stopColor="#fff040" /><stop offset="1" stopColor="#ffe020" stopOpacity="0" /></radialGradient>
      {gdef("wall", [[0, "#bd7800"], [.3, "#ac6c00"], [.6, "#a06200"], [.85, "#aa6800"], [.95, "#c87e00"], [1, "#b06c00"]])}
      {gdef("boss", [[0, "#cf8400"], [.25, "#ac6a00"], [.45, "#a06000"], [.7, "#b06c00"], [1, "#c87c00"]])}
      {gdef("ring", [[0, "#c87c00"], [.2, "#f8e030"], [.5, "#f6c000"], [.8, "#f4a000"], [1, "#d88000"]])}
      {gdef("well", [[0, "#c87e00"], [.25, "#b87200"], [.55, "#9e6000"], [.85, "#b06c00"], [1, "#c07800"]])}
      {gdef("hole", [[0, "#c47800"], [.5, "#a66600"], [1, "#aa6a00"]])}
      <linearGradient id="bossV" x1="0" x2="0" y1="0" y2="1"><stop stopColor="#f0a000" stopOpacity=".5" /><stop offset=".5" stopColor="#f0a000" stopOpacity="0" /></linearGradient>
      <clipPath id="ann"><ellipse cx="804" cy="347" rx="134" ry="69" /></clipPath>
      <clipPath id="tf"><FaceShape /></clipPath>
    </defs>

    <ellipse cx="807" cy="630.5" rx="327" ry="103" transform="rotate(13.6 807 630.5)" fill="none" stroke="#9c9ce4" strokeWidth="1.6" />
    <path d="M1045 708L1111 728" stroke="#b4b4ac" strokeWidth="1.6" strokeDasharray="8 4 2 4" fill="none" />
    <path d="M1106 728H1116M1111 723V733" stroke="#b0b0c0" fill="none" />
    <path d={wall} fill="url(#wall)" />
    <path d={wallEdge} fill="none" stroke="#3a3020" strokeWidth="0.9" />
    <g fill="url(#face)"><FaceShape /></g>
    <g clipPath="url(#tf)">
      <circle cx="865" cy="540" r="60" fill="url(#hl)" />
      <path d="M855 523C920 550 980 565 1025 590C1070 610 1105 625 1130 642V420H880Z" fill="#e0b000" opacity=".4" />
      <path d={fold} fill="none" stroke="#d09000" strokeWidth="0.8" opacity=".6" />
    </g>
    <path d={faceEdge} fill="none" stroke="#9a9ce8" strokeWidth="1.7" />

    <path d="M670 347V460A135 71 0 0 0 940 460V343Z" fill="url(#boss)" />
    <path d="M670 347V460A135 71 0 0 0 940 460V343Z" fill="url(#bossV)" />
    <path d="M738 385V462H872V385Z" fill="url(#hole)" />
    <ellipse cx="805" cy="463" rx="67" ry="33" fill="#f4bb00" />
    <path d="M715 373C722 405 760 428 803 427 850 428 885 405 893 376Z" fill="#e8a000" stroke="#f8cc20" strokeWidth="1" />
    <path d="M670 460A135 71 0 0 0 940 460" fill="none" stroke="#80e0a0" strokeWidth="1.8" />
    <ellipse cx="805" cy="460" rx="133" ry="66" fill="none" stroke="#c09020" strokeWidth=".8" opacity=".55" />

    <ellipse cx="804" cy="347" rx="134" ry="69" fill="#f8bc00" />
    <g clipPath="url(#ann)">
      <ellipse cx="804" cy="345" rx="100" ry="50" fill="url(#ring)" stroke="#333" strokeWidth="1" />
      <ellipse cx="804" cy="355" rx="91" ry="48" fill="url(#well)" stroke="#333" strokeWidth="1" />
      <path d="M716 381C716 357 757 339 805 339 853 339 895 357 895 381 895 400 850 416 805 416 760 416 716 400 716 381Z" fill="url(#ring)" stroke="#333" strokeWidth=".9" />
      <path d="M728 384C728 362 765 345 805 345 845 345 884 362 884 384" fill="none" stroke="#444" strokeWidth=".8" />
      <path d="M738 388C738 368 770 357 805 357 840 357 872 368 872 388 862 399 835 401 805 401 775 401 748 399 738 388Z" fill="url(#well)" stroke="#333" strokeWidth="1" />
    </g>
    <ellipse cx="804" cy="347" rx="134" ry="69" fill="none" stroke="#a8b0ea" strokeWidth="2" />

    <g fill="none" stroke="#f8a860" strokeWidth="2.4">
      <path d="M808 632L867 648 940 663 996 672 1068 675 1109 676 1110 637 921 498 918 387" />
      <path d="M805 462L862 480 862 407 880 410 881 377 887 373 913 382" />
      <path d="M856 403H868" strokeWidth="1.2" />
    </g>
    <ellipse cx="804.5" cy="346.5" rx="327" ry="103" transform="rotate(13.6 804.5 346.5)" fill="none" stroke="#a8b0ea" strokeWidth="2" />
    <g fill="none" stroke="#2020f0" strokeWidth="1.1">
      <path d="M804 347V243" />
      <path d="M804 288L840 259V316L898 335 861 364 804 346M804 288L861 307V364" />
      <path d="M804 346L870 292" />
      <path d="M861 364L914 381" strokeDasharray="5 2" />
    </g>
    <path d="M803 232l3 10 -1 8h-4l-1-8Z" fill="#0808a8" />
    <path d="M878 286l-9 10-3-4Z" fill="#0808a8" />
    <text x="799" y="232" fontSize="12" fill="#1010c0" fontFamily="Liberation Sans">Z</text>
    <text x="876" y="287" fontSize="11" fill="#1010c0" fontFamily="Liberation Sans">Y</text>
    <text x="918" y="388" fontSize="11" fill="#1010c0" fontFamily="Liberation Sans">X</text>
    <path d="M902 378l10 4-10 1Z" fill="#1010e0" />
    <path d="M952 303L920 380" stroke="#b8a878" strokeWidth="1" fill="none" />
    <path d="M924 379l-2 10-9-4Z" fill="#c0a860" />
    {c(921, 381, 2.4, "#80c0d0")}

    <g>
      <path d="M308 834L330 843V863L317 874 296 866 296 843Z" fill="#c8ccc8" fillOpacity=".5" stroke="#b4b8b4" />
      <path d="M296 843L317 853 330 843M317 853V874M308 834V855L296 866M308 855L330 863" fill="none" stroke="#c4c8c4" />
      <path d="M296 866L322 847" stroke="#b4d0b4" strokeWidth="2.6" fill="none" />
      <text x="319" y="849" fontSize="9" fill="#b4d0b4" fontFamily="Liberation Sans">Y</text>
      <path d="M294 867V845" stroke="#1030c0" strokeWidth="2.4" fill="none" />
      <path d="M294 832l3 12h-6Z" fill="#1030c0" />
      <path d="M295 868L322 876" stroke="#e03030" strokeWidth="2.4" fill="none" />
      <path d="M332 880l-14-2 2-6Z" fill="#e03030" />
      {c(294, 868, 3.6, "#e8e8e8", "#999")}
      <text x="290" y="832" fontSize="11" fill="#3848d8" fontFamily="Liberation Sans">Z</text>
      <text x="333" y="886" fontSize="11" fill="#e04848" fontFamily="Liberation Sans">X</text>
    </g>
  </svg>
);

const Arrow = ({ solid }: any) => (
  <div className="w-[17px] h-full shrink-0 flex items-center justify-center rounded-r-[3px] bg-[linear-gradient(#3f86d8,#d8ecff_45%,#62aef0)]">
    {solid ? (
      <svg width="13" height="12" viewBox="0 0 13 12">{p("M4 1H9V6H12L6.5 11 1 6H4Z", "#111")}</svg>
    ) : (
      <svg width="12" height="8" viewBox="0 0 12 8">{p("M1 1H11L6 7Z", "#1a2a50")}</svg>
    )}
  </div>
);

const Combo = ({ w, h = "h-[18px]", children, solid, half, tight }: any) => (
  <div className={`flex shrink-0 rounded-[3px] border border-[#777] bg-white overflow-hidden ${w} ${h}`}>
    <div className={`flex-1 h-full flex items-center text-[12px] text-[#111] whitespace-nowrap overflow-hidden ${tight ? "pl-0" : "pl-[2px]"}`}>
      {half ? <div className="w-[55px] h-full flex items-center bg-white">{children}</div> : children}
      {half && <div className="flex-1 h-full bg-[#c4c4c4]" />}
    </div>
    <Arrow solid={solid} />
  </div>
);

const DSec = ({ t }: any) => (
  <div className="h-[23px] flex items-center border-b border-b-[#8a8a8a] bg-[linear-gradient(#f8f8f8,#f0f0f0_50%,#d4d4d4_55%,#dedede)]">
    <div className="flex-1 pl-[5px] pt-[1px] text-[12px] font-bold text-[#222]">{t}</div>
    <div className="w-[22px] h-full border-l border-l-[#999] flex items-center justify-center"><Caret /></div>
  </div>
);

const FRow = ({ t, children }: any) => (
  <div className="flex items-center justify-between pl-[6px] pr-[9px] text-[12px] text-[#222]">
    <span className="pt-[1px] leading-[16px]">{t}</span>
    {children}
  </div>
);

const Dialog = () => (
  <div className="absolute left-[141px] top-[122px] w-[289px] h-[344px] flex flex-col rounded-t-[3px] bg-[linear-gradient(#ececec,#e6e6e6_80%,#dcdcdc)] border-x border-x-[#777] z-10">
    <div className="h-[20px] flex items-center bg-[linear-gradient(#6a6a6a,#222_40%,#000)] text-white">
      <div className="w-[20px] h-full flex items-center justify-center border-r border-r-[#888]">
        <svg width="14" height="14" viewBox="0 0 16 16">{c(8, 8, 4, "none", "#fff", 2.6)}{p("M8 1V3M8 13V15M1 8H3M13 8H15M3 3L4.5 4.5M11.5 11.5L13 13M3 13L4.5 11.5M11.5 4.5L13 3", "none", "#fff", 1.8)}</svg>
      </div>
      <div className="ml-[8px] flex-1 text-[13px] font-bold">变化扫掠</div>
      <div className="w-[21px] h-full flex items-center justify-center border-l border-l-[#888]">
        <svg width="14" height="14" viewBox="0 0 14 14">{p("M3 3C8 0 13 4 11 8 9 12 5 11 3 10", "none", "#fff", 2.2)}{p("M1 7L6 9 2 12Z", "#fff")}</svg>
      </div>
      <div className="w-[21px] h-full flex items-center justify-center border-l border-l-[#888]">
        <svg width="14" height="14" viewBox="0 0 14 14">{p("M2 2L12 12M12 2L2 12", "none", "#fff", 3)}</svg>
      </div>
    </div>
    <div className="mx-[5px] mt-[5px] border-x border-x-[#b0b0b0]">
      <DSec t="截面" />
      <div className="h-[47px] pb-[3px] bg-[#d0d0d0] flex items-center pl-[7px]">
        <div className="w-[200px] h-[31px] rounded-[6px] flex items-center pl-[2px] text-[12px] text-[#222] bg-[linear-gradient(90deg,#e4a262,#e0a878_55%,#d4cfc8_95%,#d0d0d0)]">
          <Tk />
          <span className="ml-[3px]">选择曲线</span>
          <span className="ml-[3px] text-[11px] font-['Liberation_Serif',serif]">（11）</span>
        </div>
        <div className="ml-[3px] w-[22px] h-[24px] rounded-[3px] border border-[#aaa] bg-[#e4e4e4] flex items-center justify-center">
          <svg width="16" height="16" viewBox="0 0 16 16">{p("M2 3L14 2 12 14 4 13Z", "#a8a8a8", "#999")}{p("M3 12L13 3", "none", "#e09080")}</svg>
        </div>
        <div className="ml-[4px] w-[30px] h-[31px] rounded-[3px] border border-[#888] bg-[linear-gradient(#ff8a30,#f88030)] flex items-center justify-center">
          <svg width="26" height="26" viewBox="0 0 26 26">{p("M3 2V24M3 6C10 5 20 8 23 24", "none", "#1030c0", 1.5)}{p("M3 6C12 5 20 9 23 24", "none", "#d01010", 1.6)}{p("M14 6V24", "none", "#10a080", 1)}{c(18, 18, 5, "none", "#1030c0", 1.4)}</svg>
        </div>
      </div>
      <DSec t="限制" />
      <div className="h-[101px] bg-[#d0d0d0] pt-[7px] flex flex-col gap-[4px]">
        <FRow t="起始"><Combo w="w-[106px]">弧长百分比</Combo></FRow>
        <FRow t="弧长百分比"><Combo w="w-[106px]" solid half><span className="w-[7px] h-[12px] bg-[#2b6cd0] text-white text-[11px] leading-[12px] font-['Liberation_Sans']">0</span></Combo></FRow>
        <FRow t="终止"><Combo w="w-[106px]">弧长百分比</Combo></FRow>
        <FRow t="弧长百分比"><Combo w="w-[106px]" solid half><span className="text-[11px] font-['Liberation_Sans']">100</span></Combo></FRow>
      </div>
      <DSec t="布尔" />
      <div className="h-[41px] bg-[#d0d0d0] pt-[7px]">
        <FRow t="布尔">
          <Combo w="w-[106px]" h="h-[24px]">
            <svg width="16" height="16" viewBox="0 0 16 16" className="ml-[1px]">{c(10, 10, 5, "#20a090", "#111", 1)}{p("M2 2L5 3 6 1 7 4 9 5 6 6 5 8 4 6 1 5 3 4Z", "#f0e020", "#887700", 0.4)}</svg>
            <span className="ml-[5px]">无</span>
          </Combo>
        </FRow>
      </div>
      <div className="h-[14px] bg-[linear-gradient(#fafafa,#e8e8e8)] border-b border-b-[#888] flex items-center justify-center gap-[3px]">
        {[0, 1, 2].map((i) => <svg key={i} width="12" height="7" viewBox="0 0 12 7">{p("M1 1L6 5 11 1", "none", "#111", 2)}</svg>)}
      </div>
    </div>
    <div className="mx-[6px] mt-[3px] h-[2px] bg-[#f8f8f8] border-t border-t-[#c4c4c4]" />
    <div className="mt-[4px] flex justify-end gap-[7px] pr-[16px] text-[12px] text-[#111]">
      <div className="w-[52px] h-[18px] rounded-[4px] border border-[#444] bg-[linear-gradient(#c8f0b0,#90e070)] flex items-center justify-between px-[2px]">
        <span className="text-[10px]">&lt;</span><span>确定</span><span className="text-[10px]">&gt;</span>
      </div>
      <div className="w-[52px] h-[18px] rounded-[4px] border border-[#444] bg-[linear-gradient(#fafafa,#d8d8d8)] flex items-center justify-center">取消</div>
    </div>
    <div className="mt-auto -mx-px h-[8px] rounded-b-[4px] bg-[linear-gradient(#3a3a3a,#111)]" />
  </div>
);

const Popup = () => (
  <div className="absolute left-[950px] top-[276px] w-[149px] h-[27px] flex items-center border border-[#808080] bg-[linear-gradient(#dcdcdc,#d0d0d0)] z-10">
    <div className="w-[12px] h-full bg-[linear-gradient(90deg,#777,#333)] flex items-center justify-center">
      <div className="w-[7px] h-[16px] bg-[radial-gradient(#ccc_1px,transparent_1.5px)] bg-[length:3.5px_4px]" />
    </div>
    <span className="ml-[6px] text-[10px] font-['Liberation_Serif',serif] text-[#111]">％</span>
    <span className="ml-[2px] text-[12px] text-[#111]">起始限制</span>
    <div className="ml-[2px]"><Combo w="w-[60px]" solid><span className="text-[11px] font-['Liberation_Sans']">0</span></Combo></div>
  </div>
);

const St = ({ children }: any) => <svg width="16" height="16" viewBox="0 0 16 16" className="shrink-0">{children}</svg>;
const Gl = (d: string) => <St>{p(d, "none", "#777", 1.1)}</St>;

const StatusRow = () => (
  <div className="h-[27px] flex items-center pl-[5px] pt-[1px] bg-[linear-gradient(#e4e4e4,#d4d4d4)] border-t border-t-[#8f8f8f] border-b border-b-[#f0f0f0]">
    <Combo w="w-[114px]" h="h-[17px]" tight>没有选择过滤器</Combo>
    <div className="ml-[9px]"><Combo w="w-[118px]" h="h-[17px]" tight>仅在工作部件内</Combo></div>
    <T w="w-[22px]" cls="ml-[10px]"><St>{c(5, 6, 3, "#aaa", "#888")}{c(10, 5, 3, "#aaa", "#888")}{p("M3 9L9 8 13 11 9 15 3 13Z", "#a09a90", "#888")}</St></T>
    <Sep w="w-[7px] !h-[22px]" />
    <T w="w-[18px]"><St>{p("M6 4C3 5 3 9 6 9M9 4C12 5 12 9 9 9", "none", "#888", 1.6)}{p("M5 9h6l-2 3v3H7v-3Z", "#888")}</St></T>
    <T w="w-[22px]"><St>{p("M0.5 0.5H15.5V15.5H0.5Z", "#eee", "#d01010", 1)}{p("M3 6H9M6 3V9", "none", "#333")}{c(6, 6, 2, "none", "#333")}{p("M9 8h5l-2 3v3h-1v-3Z", "#f0c020")}</St></T>
    <T w="w-[15px]"><Dd /></T>
    <T w="w-[21px]"><St>{p("M2 5C3 0 9 0 9 4", "none", "#1030a0", 1.4)}{c(9, 10, 4.5, "none", "#d01010", 1.6)}{p("M9 4V16M3 10H15", "none", "#d01010", 1)}</St></T>
    <T w="w-[23px]"><St>{p("M1 4C3 1 8 1 10 4L12 15H8L7 6C5 5 3 5 1 6Z", "#888")}{p("M11 8H15V15H11Z", "#a09a90")}</St></T>
    <Sep w="w-[6px] !h-[22px]" />
    <T w="w-[22px]"><St>{p("M2 2H14V14H2Z", "none", "#111", 1)}{c(2, 2, 1.2, "#d01010")}{c(14, 14, 1.2, "#d01010")}{c(14, 2, 1.2, "#d01010")}</St></T>
    <T w="w-[13px]"><Dd /></T>
    <Sep w="w-[7px] !h-[22px]" />
    <T w="w-[22px]"><St>{p("M1 6L11 1 15 6 5 14 1 11Z", "#f0f0f0", "#555")}{p("M7 4L11 6", "none", "#d06060")}</St></T>
    <T w="w-[23px]"><St>{p("M8 0L15 3V13L8 16 1 13V3Z", "#4a9ce8", "#2060a0")}{p("M1 3L8 6 15 3 8 1Z", "#cfe4f8")}{p("M4 5V12", "none", "#f09090")}</St></T>
    <Sep w="w-[7px] !h-[22px]" />
    <Combo w="w-[119px]" h="h-[17px]" tight>相连曲线</Combo>
    <T w="w-[23px]" cls="ml-[8px]"><St>{p("M2 4H14M4 1V15M11 1V15", "none", "#d01010", 1.5)}{p("M2 4H14", "none", "#111", 1.4)}</St></T>
    <T w="w-[23px]"><St>{p("M1 4H15", "none", "#101090", 1.4)}{p("M4 1V15M11 1V15M4 8L9 5", "none", "#c02050", 1.4)}</St></T>
    <T w="w-[23px]"><St>{p("M7 1H10V6H7Z", "#e03020")}{p("M4 6H12V10H4Z", "#f0c060", "#555")}{p("M2 10H7V15H2ZM9 10H14V15H9Z", "#fff", "#111")}</St></T>
    <T w="w-[23px]"><St>{p("M1 1H7V5H1Z", "#fff", "#1030c0", 1.3)}{p("M8 3H14V8H8Z", "#e03020", "#1030c0")}{p("M7 6V10L3 9M5 15L9 11 7 9", "none", "#1030c0")}{c(7, 12, 3, "#c01010")}</St></T>
    <T w="w-[23px]"><St>{p("M2 5H8V1L15 8 8 15V11H2Z", "#6fd4ee", "#1060a8", 1.1)}</St></T>
    <Sep w="w-[7px] !h-[22px]" />
    <T w="w-[23px]"><St>{p("M8 1V15M1 8H15", "none", "#777", 1)}{c(8, 8, 5.5, "none", "#888", 1.6)}{c(8, 8, 1.6, "#b08060")}{p("M0 3L4 8 0 13Z", "#888")}</St></T>
    <T w="w-[22px]"><St>{p("M2 15L14 2", "none", "#777", 1.1)}{c(14, 2, 1.5, "#a86060")}</St></T>
    <T w="w-[23px]"><St>{p("M2 15L14 2", "none", "#777", 1.1)}{c(8, 8.5, 1.7, "#a86060")}</St></T>
    <T w="w-[24px]">{Gl("M3 1C9 1 4 9 8 12 10 14 13 14 15 15")}</T>
    <T w="w-[22px]"><St>{p("M1 12L6 3 10 13 15 8", "none", "#777", 1.1)}{c(6, 3, 1.4, "#a86060")}{c(10, 13, 1.4, "#a86060")}{c(1, 12, 1.4, "#a86060")}</St></T>
    <T w="w-[24px]"><St>{p("M8 2V15M1 10C3 5 13 5 15 10", "none", "#777", 1.1)}{c(8, 6.5, 1.4, "#a86060")}</St></T>
    <T w="w-[22px]"><St>{c(8, 8, 7, "none", "#777", 1.1)}{c(8, 8, 1.4, "#a86060")}</St></T>
    <T w="w-[24px]"><St>{c(8, 8, 6.5, "none", "#777", 1.3)}{c(8, 1.5, 1.4, "#a86060")}{c(1.5, 8, 1.4, "#a86060")}{c(14.5, 8, 1.4, "#a86060")}{c(8, 14.5, 1.4, "#a86060")}</St></T>
    <T w="w-[22px]"><St>{p("M8 1V15M1 8H15", "none", "#777", 1.1)}{c(8, 8, 1, "#a86060")}</St></T>
    <T w="w-[22px]"><St>{p("M2 15L14 2", "none", "#777", 1.1)}{c(6, 10.5, 1.5, "#a86060")}</St></T>
    <T w="w-[24px]"><St>{p("M1 5L10 1 15 4V12L9 13 7 16 3 13 1 11Z", "#8a8a8a", "#666")}{c(10, 5, 1.4, "#c07070")}</St></T>
    <Sep w="w-[6px] !h-[22px]" />
    <T w="w-[20px]"><St>{p("M3 1L13 3V15L3 13Z", "#ddd", "#666")}{p("M6 2V14M10 3V14M3 5L13 7M3 9L13 11", "none", "#777", 0.8)}{c(8, 8, 1.2, "#c03030")}</St></T>
  </div>
);

const Watermark = () => (
  <>
    <svg className="absolute left-[1097px] top-[897px] z-10" width="72" height="84" viewBox="0 0 72 84">
      <path d="M36 0L71 21V56L36 84 1 56V21Z" fill="#b4dcf4" opacity=".72" />
      <path d="M36 0C58 14 62 44 46 84L71 56V21Z" fill="#6ec2f0" opacity=".75" />
      <path d="M1 56C15 30 38 20 71 21V56L36 84Z" fill="#5fb8ea" opacity=".38" />
      <path d="M36 24L53 34V54L36 64 19 54V34Z" fill="#94cef0" stroke="#d8e6ee" strokeWidth="4" opacity=".9" />
      <path d="M36 44V64L53 54V34Z" fill="#62b4e4" opacity=".85" />
      <path d="M19 34L36 44 53 34 36 24Z" fill="#b8e0f6" />
    </svg>
    <div className="absolute left-[1176px] top-[905px] z-10 text-[42px] leading-[50px] font-bold text-white/60 whitespace-nowrap font-['Liberation_Sans','Noto_Sans_CJK_SC',sans-serif]">3D世界网</div>
    <div className="absolute left-[1178px] top-[954px] z-10 text-[14px] leading-[18px] tracking-[3px] text-white/55 whitespace-nowrap font-['Liberation_Sans',sans-serif]">WWW.3DSJW.COM</div>
  </>
);

const Ime = () => (
  <div className="absolute left-[1064px] top-[959px] z-20 flex items-end h-[27px]">
    <div className="w-[28px] h-[27px] -rotate-[8deg] rounded-[3px] bg-[#2bb32b] flex items-center justify-center text-white text-[26px] font-bold italic leading-none font-['Liberation_Sans',sans-serif]">S</div>
    <div className="w-[135px] h-[22px] bg-[#f3f6f8]/90 border-b border-r border-[#b8c0c8] flex items-center pl-[6px] text-[#3b4658]">
      <span className="text-[14px] font-bold">五</span>
      <svg width="14" height="14" viewBox="0 0 14 14" className="ml-[9px]">{p("M9 0C6 6 4 9 0 10 3 14 10 14 12 9 13 6 12 2 9 0Z", "#1f4d9c")}</svg>
      <span className="ml-[7px] w-[3px] h-[3px] -mt-[8px] rounded-full bg-[#1f60a8]" />
      <span className="ml-[1px] text-[14px] font-bold leading-none">,</span>
      <Keyboard size={17} className="ml-[12px]" strokeWidth={2.2} />
      <User size={15} className="ml-[6px] text-[#a8c0c0]" strokeWidth={3} />
      <Wrench size={16} className="ml-[7px]" strokeWidth={2.6} />
    </div>
  </div>
);

export default function App() {
  return (
    <div className="relative w-[1380px] h-[993px] overflow-hidden bg-black text-[12px] font-['Liberation_Sans','Noto_Sans_CJK_SC',sans-serif]">
      <div className="h-[29px] flex items-center pt-[3px] pl-[6px] rounded-t-[4px] bg-[linear-gradient(#8a8a8a_0,#3c3c3c_3px,#1a1a1a_6px,#0c0c0c_100%)] text-white text-[13px]">
        <svg width="18" height="18" viewBox="0 0 24 24" className="shrink-0">{c(12, 14, 9, "#2a78d8")}{p("M1 19C8 22 19 17 23 8", "none", "#f0c020", 2.4)}{p("M5 0H17L11 9Z", "#e02020")}</svg>
        <span className="ml-[3px] whitespace-pre">NX 10.0.0.24 - 建模 - [_model16.prt <span className="text-[12px]">（修改的） ]</span></span>
      </div>
      <div className="flex h-[956px]">
        <div className="w-[4px] shrink-0 bg-black" />
        <div className="flex-1 flex flex-col min-w-0">
          <Menu />
          <Row1 />
          <Row2 />
          <div className="h-[814px] flex">
            <TabStrip />
            <Nav />
            <div className="flex-1 bg-[linear-gradient(#b9babc,#d0d1d3_50%,#e7e8e9)]"><Model /></div>
          </div>
          <StatusRow />
          <div className="h-[23px] flex items-center pl-[3px] bg-[linear-gradient(#e0e0e0,#d8d8d8)] text-[13px] font-bold text-[#111]">
            <div className="w-[836px]">选择截面几何图形</div>
            <div className="h-full border-l border-l-[#f4f4f4]" />
          </div>
        </div>
      </div>
      <Dialog />
      <Popup />
      <Watermark />
      <Ime />
      <div className="absolute right-0 top-[890px] w-[10px] h-[58px] rounded-l-[3px] bg-[#37424a] flex flex-col justify-end gap-[2px] pb-[3px] pl-[3px] z-10">
        {[0, 1, 2, 3, 4, 5, 6, 7].map((i) => <div key={i} className="w-[4px] h-[2px] bg-[#58c0a0]" />)}
      </div>
    </div>
  );
}
